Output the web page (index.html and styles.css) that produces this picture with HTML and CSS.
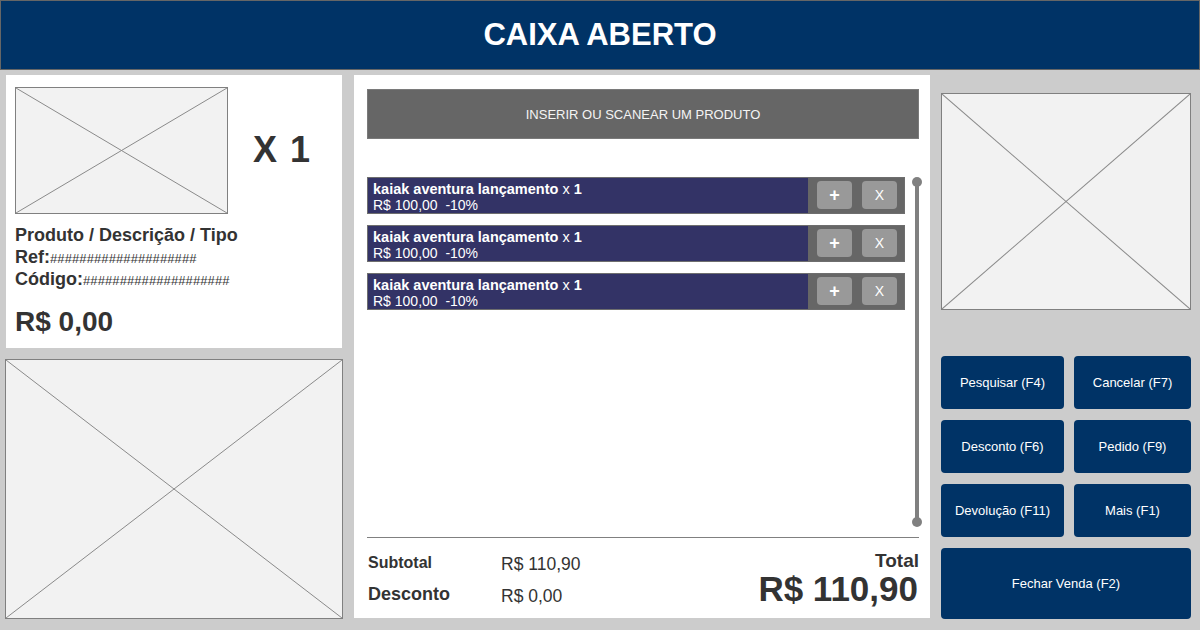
FILE: index.html
```html
<!DOCTYPE html>
<html lang="pt-BR">
<head>
<meta charset="utf-8">
<title>Caixa Aberto</title>
<link rel="stylesheet" href="styles.css">
</head>
<body>
<header class="header">CAIXA ABERTO</header>
<main class="main">
  <section class="col-left">
    <div class="product-card">
      <div class="product-top">
        <div class="ph ph-thumb"><svg viewBox="0 0 100 100" preserveAspectRatio="none"><line x1="0" y1="0" x2="100" y2="100"/><line x1="100" y1="0" x2="0" y2="100"/></svg></div>
        <div class="qty">X 1</div>
      </div>
      <div class="product-info">
        <div class="pi-title">Produto / Descrição / Tipo</div>
        <div class="pi-line">Ref:<span class="hash">####################</span></div>
        <div class="pi-line">Código:<span class="hash">####################</span></div>
      </div>
      <div class="pi-price">R$ 0,00</div>
    </div>
    <div class="ph ph-left"><svg viewBox="0 0 100 100" preserveAspectRatio="none"><line x1="0" y1="0" x2="100" y2="100"/><line x1="100" y1="0" x2="0" y2="100"/></svg></div>
  </section>

  <section class="col-center">
    <div class="search">INSERIR OU SCANEAR UM PRODUTO</div>
    <div class="list-area">
      <div class="items">
        <div class="item">
          <div class="item-info">
            <div class="item-name"><b>kaiak aventura lançamento</b> x <b>1</b></div>
            <div class="item-price">R$ 100,00 &nbsp;-10%</div>
          </div>
          <div class="item-actions"><span class="ibtn plus">+</span><span class="ibtn">X</span></div>
        </div>
        <div class="item">
          <div class="item-info">
            <div class="item-name"><b>kaiak aventura lançamento</b> x <b>1</b></div>
            <div class="item-price">R$ 100,00 &nbsp;-10%</div>
          </div>
          <div class="item-actions"><span class="ibtn plus">+</span><span class="ibtn">X</span></div>
        </div>
        <div class="item">
          <div class="item-info">
            <div class="item-name"><b>kaiak aventura lançamento</b> x <b>1</b></div>
            <div class="item-price">R$ 100,00 &nbsp;-10%</div>
          </div>
          <div class="item-actions"><span class="ibtn plus">+</span><span class="ibtn">X</span></div>
        </div>
      </div>
      <div class="scroll"><span class="knob"></span><span class="track"></span><span class="knob"></span></div>
    </div>
    <div class="totals">
      <div class="sums">
        <div class="lbl lbl-sub">Subtotal</div><div class="val val-sub">R$ 110,90</div>
        <div class="lbl lbl-desc">Desconto</div><div class="val val-desc">R$ 0,00</div>
      </div>
      <div class="grand">
        <div class="grand-lbl">Total</div>
        <div class="grand-val">R$ 110,90</div>
      </div>
    </div>
  </section>

  <section class="col-right">
    <div class="ph ph-right"><svg viewBox="0 0 100 100" preserveAspectRatio="none"><line x1="0" y1="0" x2="100" y2="100"/><line x1="100" y1="0" x2="0" y2="100"/></svg></div>
    <div class="actions">
      <button class="act">Pesquisar (F4)</button>
      <button class="act">Cancelar (F7)</button>
      <button class="act">Desconto (F6)</button>
      <button class="act">Pedido (F9)</button>
      <button class="act">Devolução (F11)</button>
      <button class="act">Mais (F1)</button>
      <button class="act act-wide">Fechar Venda (F2)</button>
    </div>
  </section>
</main>
</body>
</html>
```

FILE: styles.css
```css
* { box-sizing: border-box; }
html, body { margin: 0; padding: 0; }
body {
  width: 1200px;
  height: 630px;
  background: #cccccc;
  font-family: "Liberation Sans", Arial, sans-serif;
  color: #333333;
  overflow: hidden;
}
.header {
  height: 70px;
  background: #003366;
  border: 1px solid #666666;
  color: #ffffff;
  font-weight: bold;
  font-size: 31px;
  display: flex;
  align-items: center;
  justify-content: center;
}
.main {
  display: flex;
  gap: 11px;
  height: 560px;
  padding: 5px 9px 11px 5px;
}
.col-left {
  width: 338px;
  flex-shrink: 0;
  display: flex;
  flex-direction: column;
  gap: 11px;
}
.product-card {
  background: #ffffff;
  margin: 0 1px;
  height: 273px;
  padding: 12px 9px 0 9px;
}
.product-top {
  display: flex;
  align-items: center;
}
.ph {
  background: #f2f2f2;
  border: 1px solid #808080;
  display: block;
}
.ph svg {
  display: block;
  width: 100%;
  height: 100%;
}
.ph line {
  stroke: #8a8a8a;
  stroke-width: 1;
  vector-effect: non-scaling-stroke;
}
.ph-thumb { width: 213px; height: 127px; flex-shrink: 0; }
.qty {
  margin-left: 25px;
  font-size: 36px;
  font-weight: bold;
  word-spacing: 3px;
  color: #333333;
  margin-top: -2px;
}
.product-info { margin-top: 11px; }
.pi-title, .pi-line {
  font-size: 18px;
  font-weight: bold;
  line-height: 21.5px;
}
.hash {
  font-weight: normal;
  font-size: 13px;
  letter-spacing: 0.1px;
}
.pi-price {
  margin-top: 14px;
  font-size: 28px;
  font-weight: bold;
  line-height: 32px;
}
.ph-left { width: 338px; height: 260px; }

.col-center {
  width: 576px;
  flex-shrink: 0;
  background: #ffffff;
  height: 543px;
  padding: 14px 11px 0 13px;
  display: flex;
  flex-direction: column;
}
.search {
  height: 50px;
  background: #666666;
  border: 1px solid #7a7a7a;
  color: #f4f4f4;
  font-size: 13px;
  display: flex;
  align-items: center;
  justify-content: center;
}
.list-area {
  margin-top: 38px;
  display: flex;
  height: 350px;
}
.items {
  width: 538px;
  flex-shrink: 0;
  display: flex;
  flex-direction: column;
  gap: 11px;
}
.item {
  height: 37px;
  display: flex;
  border: 1px solid #6e6e6e;
  background: #333366;
}
.item-info {
  flex: 1;
  padding: 3px 0 0 5px;
  color: #ffffff;
}
.item-name { font-size: 14.5px; line-height: 16px; white-space: nowrap; }
.item-price { font-size: 14px; line-height: 16px; }
.item-actions {
  width: 96px;
  flex-shrink: 0;
  background: #666666;
  display: flex;
  align-items: center;
  gap: 10px;
  padding: 0 6px 1px 9px;
}
.ibtn {
  width: 35px;
  height: 28px;
  flex-shrink: 0;
  border-radius: 4px;
  background: #999999;
  color: #ffffff;
  font-size: 14px;
  display: flex;
  align-items: center;
  justify-content: center;
}
.ibtn.plus { font-size: 18px; font-weight: bold; }
.scroll {
  margin-left: 7px;
  width: 10px;
  flex-shrink: 0;
  display: flex;
  flex-direction: column;
  align-items: center;
}
.knob {
  width: 10px;
  height: 10px;
  border-radius: 50%;
  background: #808080;
}
.track {
  flex: 1;
  width: 4px;
  background: #808080;
  margin: -2px 0;
}
.totals {
  margin-top: 10px;
  border-top: 1px solid #808080;
  display: flex;
  justify-content: space-between;
  color: #333333;
}
.sums {
  display: grid;
  grid-template-columns: 133px auto;
  padding: 15px 0 0 1px;
  align-content: start;
}
.lbl { font-weight: bold; }
.lbl-sub { font-size: 16px; line-height: 20px; }
.val-sub { font-size: 17.5px; line-height: 20px; padding-top: 1px; }
.lbl-desc { font-size: 18px; line-height: 22px; margin-top: 9px; }
.val-desc { font-size: 17.5px; line-height: 22px; margin-top: 11px; }
.grand {
  text-align: right;
  padding-top: 12px;
  font-weight: bold;
}
.grand-lbl { font-size: 19px; line-height: 22px; }
.grand-val { font-size: 35px; line-height: 34px; margin-right: 1px; }

.col-right {
  width: 250px;
  flex-shrink: 0;
  display: flex;
  flex-direction: column;
}
.ph-right { width: 250px; height: 217px; margin-top: 18px; }
.actions {
  margin-top: 46px;
  display: grid;
  grid-template-columns: 123px 1fr;
  grid-template-rows: 53px 53px 53px 71px;
  column-gap: 10px;
  row-gap: 11px;
}
.act {
  border: none;
  border-radius: 4px;
  background: #003366;
  color: #ffffff;
  font-family: "Liberation Sans", Arial, sans-serif;
  font-size: 13px;
  padding: 0;
}
.act-wide { grid-column: 1 / 3; }
```
